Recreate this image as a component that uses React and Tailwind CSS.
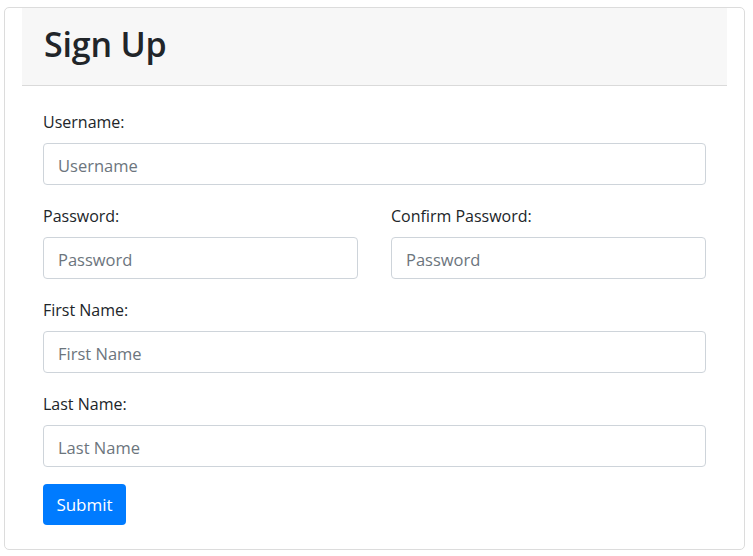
export default function App() {
  const inputCls = "mt-[9px] h-[42px] w-full border border-[#ced4da] rounded-[4px] px-[14px] pt-[2px] text-[16.5px] placeholder:text-[#6c757d] outline-none";
  const labelCls = "text-[16px] leading-[24px] h-[24px]";
  return (
    <div className="w-[753px] h-[556px] bg-white pt-[7px] pl-[4px] font-['Open_Sans',sans-serif] text-[#212529]">
      <div className="w-[741px] h-[543px] border border-[#dcdcdc] rounded-[5px] flex flex-col">
        <div className="mx-[17px] h-[78px] bg-[#f7f7f7] border-b border-[#dadada] flex items-center pl-[22px]">
          <h2 className="text-[34px] leading-none font-semibold tracking-[-0.2px] mt-[-5px]">Sign Up</h2>
        </div>
        <div className="flex flex-col pl-[38px] pr-[38px] pt-[24px]">
          <label className={labelCls}>Username:</label>
          <input className={inputCls} placeholder="Username" />
          <div className="mt-[19px] grid grid-cols-2 gap-x-[33px]">
            <div className="flex flex-col">
              <label className={labelCls}>Password:</label>
              <input className={inputCls} placeholder="Password" />
            </div>
            <div className="flex flex-col">
              <label className={labelCls}>Confirm Password:</label>
              <input className={inputCls} placeholder="Password" />
            </div>
          </div>
          <label className={"mt-[19px] " + labelCls}>First Name:</label>
          <input className={inputCls} placeholder="First Name" />
          <label className={"mt-[19px] " + labelCls}>Last Name:</label>
          <input className={inputCls} placeholder="Last Name" />
          <div className="mt-[17px]">
            <button className="h-[41px] w-[83px] bg-[#007bff] text-white rounded-[4px] text-[17px] pt-[1px]">Submit</button>
          </div>
        </div>
      </div>
    </div>
  );
}
